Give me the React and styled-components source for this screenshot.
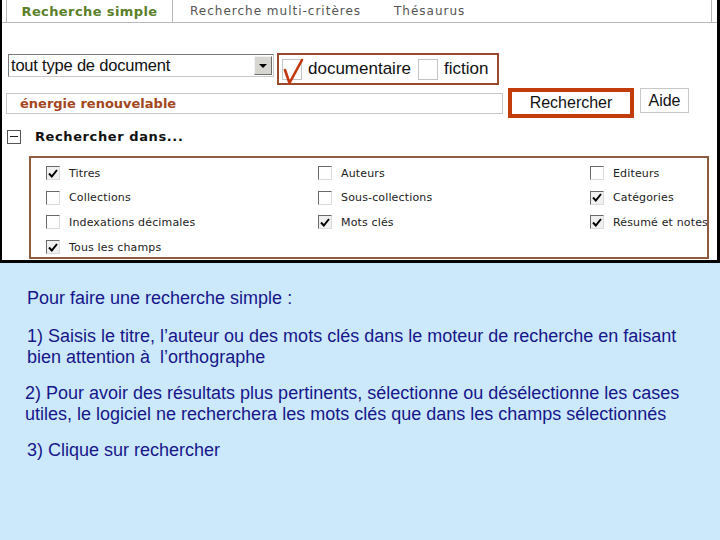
import React from "react";
import styled, { createGlobalStyle } from "styled-components";

const Global = createGlobalStyle`
  html, body { margin: 0; padding: 0; }
  body { width: 720px; height: 540px; overflow: hidden; background: #cce9fb; }
  * { box-sizing: border-box; }
`;

const Page = styled.div`
  width: 720px;
  height: 540px;
  display: flex;
  flex-direction: column;
  background: #cce9fb;
`;

const TopPanel = styled.div`
  height: 263px;
  background: #ffffff;
  border-left: 2px solid #000;
  border-right: 3px solid #000;
  border-bottom: 3px solid #000;
  display: flex;
  flex-direction: column;
`;

const TabBar = styled.div`
  height: 23px;
  display: flex;
  border-bottom: 1px solid #b8b8b8;
  padding-left: 4px;
  padding-right: 5px;
`;

const Tab = styled.div`
  height: 22px;
  display: flex;
  align-items: center;
  justify-content: ${(p) => (p.$active ? "center" : "flex-start")};
  width: ${(p) => p.$w}px;
  padding-left: ${(p) => p.$pl || 0}px;
  border-left: ${(p) => (p.$active ? "1px solid #b8b8b8" : "none")};
  border-right: ${(p) => (p.$active ? "1px solid #b8b8b8" : "none")};
  font-family: "DejaVu Sans", Verdana, sans-serif;
  font-size: ${(p) => (p.$active ? "13px" : "12px")};
  font-weight: ${(p) => (p.$active ? "bold" : "normal")};
  letter-spacing: ${(p) => (p.$active ? "0.4px" : "1px")};
  color: ${(p) => (p.$active ? "#5b7f2a" : "#555")};
`;

const TabFill = styled.div`
  flex: 1;
  border-right: 1px solid #b8b8b8;
`;

const Form = styled.div`
  padding-left: 4px;
  display: flex;
  flex-direction: column;
`;

const Row = styled.div`
  display: flex;
  align-items: flex-start;
  margin-top: ${(p) => p.$mt}px;
`;

const Select = styled.div`
  margin-left: 2px;
  margin-top: 1px;
  width: 266px;
  height: 23px;
  border: 1px solid #7a7a7a;
  border-right-color: #c8c8c8;
  border-bottom-color: #c8c8c8;
  display: flex;
  align-items: center;
  font-family: "Liberation Sans", Arial, sans-serif;
  font-size: 16.5px;
  color: #111;
  padding-left: 2px;
  letter-spacing: -0.2px;
`;

const SelectText = styled.span`
  flex: 1;
`;

const DropBtn = styled.div`
  width: 18px;
  height: 19px;
  margin-right: 1px;
  background: #d8d6d0;
  border: 1px solid;
  border-color: #f2f2f2 #6e6e6e #6e6e6e #f2f2f2;
  display: flex;
  align-items: center;
  justify-content: center;
`;

const DocGroup = styled.div`
  margin-left: 3px;
  width: 222px;
  height: 32px;
  border: 2px solid #9a4a2b;
  display: flex;
  align-items: center;
  padding-left: 3px;
  font-family: "Liberation Sans", Arial, sans-serif;
  font-size: 17px;
  color: #111;
`;

const BigBox = styled.span`
  position: relative;
  width: 20px;
  height: 21px;
  border: 1px solid #c4c4c4;
  background: #fff;
  flex: none;
  margin-left: ${(p) => p.$ml || 0}px;
  margin-right: ${(p) => p.$mr || 0}px;
`;

const RedCheck = styled.svg`
  position: absolute;
  left: -1px;
  top: -1px;
  overflow: visible;
`;

const SearchInput = styled.div`
  margin-top: 5px;
  width: 497px;
  height: 21px;
  border: 1px solid #c8c8c8;
  display: flex;
  align-items: center;
  padding-left: 13px;
  font-family: "DejaVu Sans", Verdana, sans-serif;
  font-size: 13px;
  font-weight: bold;
  color: #a3461d;
`;

const SubmitFrame = styled.div`
  margin-left: 5px;
  width: 126px;
  height: 30px;
  border: 4px solid #c23c0c;
  display: flex;
  align-items: center;
  justify-content: center;
  font-family: "Liberation Sans", Arial, sans-serif;
  font-size: 16px;
  color: #111;
  background: #fff;
`;

const AideBtn = styled.div`
  margin-left: 6px;
  width: 49px;
  height: 25px;
  border: 1px solid #c8c8c8;
  display: flex;
  align-items: center;
  justify-content: center;
  font-family: "Liberation Sans", Arial, sans-serif;
  font-size: 16px;
  color: #111;
`;

const SectionHead = styled.div`
  margin-top: 11px;
  display: flex;
  align-items: center;
  gap: 14px;
  padding-left: 1px;
`;

const Toggle = styled.span`
  width: 14px;
  height: 14px;
  border: 1px solid #555;
  display: flex;
  align-items: center;
  justify-content: center;
  &::after {
    content: "";
    width: 8px;
    height: 1px;
    background: #222;
  }
`;

const SectionTitle = styled.span`
  font-family: "DejaVu Sans", Verdana, sans-serif;
  font-size: 13px;
  font-weight: bold;
  letter-spacing: 0.6px;
  color: #111;
`;

const Fieldset = styled.div`
  margin-top: 12px;
  margin-left: 23px;
  width: 680px;
  height: 103px;
  border: 2px solid #8e5b3f;
  padding: 3px 0 0 15px;
  display: grid;
  grid-template-columns: 272px 272px 1fr;
  grid-auto-rows: 24.6px;
  overflow: hidden;
`;

const Option = styled.label`
  display: flex;
  align-items: center;
  gap: 9px;
  font-family: "DejaVu Sans", Verdana, sans-serif;
  font-size: 11px;
  letter-spacing: 0.15px;
  color: #222;
  white-space: nowrap;
`;

const Box = styled.span`
  width: 14px;
  height: 14px;
  flex: none;
  border: 1px solid;
  border-color: #6a6a6a #dcdcdc #dcdcdc #6a6a6a;
  background: ${(p) => (p.$checked ? "#f0f0f0" : "#fff")};
  display: flex;
  align-items: center;
  justify-content: center;
`;

const Instructions = styled.div`
  flex: 1;
  background: #cce9fb;
  padding: 25px 10px 0 27px;
  font-family: "Liberation Sans", Arial, sans-serif;
  font-size: 18px;
  line-height: 21px;
  color: #16168a;
  letter-spacing: 0;
`;

const Para = styled.p`
  margin: 0 0 ${(p) => p.$mb || 15}px 0;
  margin-left: ${(p) => p.$ml || 0}px;
  white-space: nowrap;
`;

const Tick = () => (
  <svg width="10" height="9" viewBox="0 0 10 9">
    <path d="M1 4.5 L3.8 7.5 L9 1" fill="none" stroke="#000" strokeWidth="2" />
  </svg>
);

const Check = ({ checked, label }) => (
  <Option>
    <Box $checked={checked}>{checked && <Tick />}</Box>
    {label}
  </Option>
);

const options = [
  ["Titres", true],
  ["Auteurs", false],
  ["Editeurs", false],
  ["Collections", false],
  ["Sous-collections", false],
  ["Catégories", true],
  ["Indexations décimales", false],
  ["Mots clés", true],
  ["Résumé et notes", true],
  ["Tous les champs", true],
];

export default function App() {
  return (
    <Page>
      <Global />
      <TopPanel>
        <TabBar>
          <Tab $active $w={167}>Recherche simple</Tab>
          <Tab $w={204} $pl={17}>Recherche multi-critères</Tab>
          <Tab $w={100} $pl={17}>Thésaurus</Tab>
          <TabFill />
        </TabBar>
        <Form>
          <Row $mt={30}>
            <Select>
              <SelectText>tout type de document</SelectText>
              <DropBtn>
                <svg width="8" height="4" viewBox="0 0 8 4">
                  <path d="M0 0 H8 L4 4 Z" fill="#000" />
                </svg>
              </DropBtn>
            </Select>
            <DocGroup>
              <BigBox $mr={6}>
                <RedCheck width="22" height="26" viewBox="0 0 22 26">
                  <path
                    d="M3 11 L7.5 24 L20 1"
                    fill="none"
                    stroke="#c4360c"
                    strokeWidth="2.6"
                    strokeLinecap="round"
                    strokeLinejoin="round"
                  />
                </RedCheck>
              </BigBox>
              documentaire
              <BigBox $ml={7} $mr={6} />
              fiction
            </DocGroup>
          </Row>
          <Row $mt={3}>
            <SearchInput>énergie renouvelable</SearchInput>
            <SubmitFrame>Rechercher</SubmitFrame>
            <AideBtn>Aide</AideBtn>
          </Row>
          <SectionHead>
            <Toggle />
            <SectionTitle>Rechercher dans...</SectionTitle>
          </SectionHead>
          <Fieldset>
            {options.map(([label, checked]) => (
              <Check key={label} label={label} checked={checked} />
            ))}
          </Fieldset>
        </Form>
      </TopPanel>
      <Instructions>
        <Para $mb={17}>Pour faire une recherche simple :</Para>
        <Para>
          1) Saisis le titre, l’auteur ou des mots clés dans le moteur de recherche en faisant
          <br />
          bien attention à &nbsp;l’orthographe
        </Para>
        <Para $ml={-2}>
          2) Pour avoir des résultats plus pertinents, sélectionne ou désélectionne les cases
          <br />
          utiles, le logiciel ne recherchera les mots clés que dans les champs sélectionnés
        </Para>
        <Para>3) Clique sur rechercher</Para>
      </Instructions>
    </Page>
  );
}
